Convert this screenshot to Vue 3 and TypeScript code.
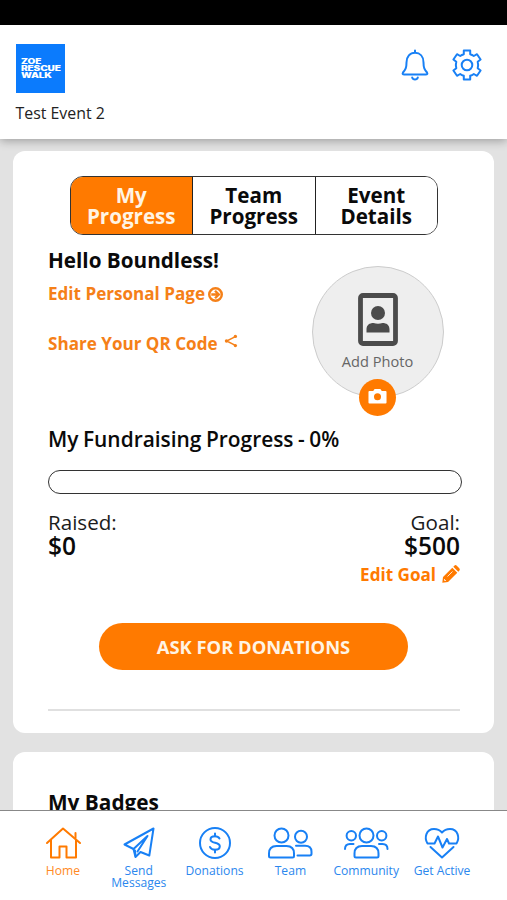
<script setup lang="ts">
import { ref } from 'vue'

interface NavItem {
  id: string
  label: string
  paths: string[]
}

const tabs: string[] = ['My Progress', 'Team Progress', 'Event Details']
const activeTab = ref(0)
const activeNav = ref('home')
const progress = ref(0)

const navItems: NavItem[] = [
  {
    id: 'home',
    label: 'Home',
    paths: ['M6 17 22 2.5 39 17', 'M10 14v17.5h8.5V20.5h7v11H35V14', 'M34.500 12V7'],
  },
  {
    id: 'messages',
    label: 'Send Messages',
    paths: ['M7.500 18.500 36.500 2.500 32.300 29.500 23.500 26 18.500 31 16.500 23Z', 'M16.500 23 30.500 10 20.500 25.500', 'M18 24.500 18.500 30'],
  },
  {
    id: 'donations',
    label: 'Donations',
    paths: [
      'M37 17a15 15 0 1 1-30 0a15 15 0 1 1 30 0Z',
      'M26.500 12.500c-1-1.800-2.500-2.300-4.500-2.300c-3 0-4.500 1.300-4.500 3.200c0 4.500 9.300 2.200 9.300 6.900c0 2.200-2 3.500-4.800 3.500c-2.500 0-4.300-.9-5-2.800',
      'M22 7.500v2.700M22 23.800v2.700',
    ],
  },
  {
    id: 'team',
    label: 'Team',
    paths: [
      'M20.500 9.500a7 7 0 1 1-14 0a7 7 0 1 1 14 0Z',
      'M2.500 31.500h22q1.500 0 1.500-1.500v-2.500q0-7.500-7.500-7.500h-10q-7.500 0-7.500 7.500V30q0 1.500 1.500 1.500Z',
      'M39 10.800a6 6 0 1 1-12 0a6 6 0 1 1 12 0Z',
      'M28 19.800h9q6.500 0 6.500 6v2q0 1.700-1.700 1.700H29.500',
    ],
  },
  {
    id: 'community',
    label: 'Community',
    paths: [
      'M29.500 9.500a7 7 0 1 1-14 0a7 7 0 1 1 14 0Z',
      'M12 31.500h21q1.500 0 1.500-1.500v-2.500q0-7.500-7.500-7.500h-9q-7.500 0-7.500 7.500V30q0 1.500 1.500 1.500Z',
      'M12 9.700a4.700 4.700 0 1 1-9.400 0a4.700 4.700 0 1 1 9.400 0Z',
      'M42.400 9.700a4.700 4.700 0 1 1-9.400 0a4.700 4.700 0 1 1 9.400 0Z',
      'M1 23c0-3.700 2-5 5-5h3.500',
      'M43.500 23c0-3.700-2-5-5-5H35',
    ],
  },
  {
    id: 'active',
    label: 'Get Active',
    paths: [
      'M11 17.500H7.500C4 12 6 3 14 3q5 0 8 3.500Q25 3 30 3c8 0 10 9 6.500 14.500h-7.500L27 13 22.500 21.500 18 10.500 14.500 17.500H11',
      'M10.500 21 22 31.500 33.500 21',
    ],
  },
]
</script>

<template>
  <div class="screen">
    <div class="status-bar"></div>
    <header class="header">
      <div class="brand">
        <div class="logo">
          <span>ZOE</span>
          <span>RESCUE</span>
          <span>WALK</span>
        </div>
        <div class="event-name">Test Event 2</div>
      </div>
      <div class="header-actions">
        <svg class="bell" viewBox="0 0 28 32">
          <path d="M14 1.500v2M5.500 13.500C5.500 7.500 9 3.800 14 3.800S22.500 7.500 22.500 13.500c0 5.500 1 7 3.500 10q1.200 2-1.300 2H3.300q-2.500 0-1.300-2C4.500 20.500 5.500 19 5.500 13.500ZM11.200 28.500q.6 2 2.800 2t2.800-2" />
        </svg>
        <svg class="gear" viewBox="0 0 32 32">
          <path d="M12.800 1.500h6.400v3.700q2 .6 3.600 1.800L26 5.200l3.600 5.300-2.900 2.200q.9 3.200 0 6.600l2.900 2.200L26 26.800 22.800 25q-1.600 1.200-3.600 1.800v3.700h-6.400v-3.700q-2-.6-3.600-1.800L6 26.800 2.400 21.500l2.900-2.200q-.9-3.400 0-6.600L2.400 10.500 6 5.200 9.200 7q1.600-1.200 3.600-1.800Z" />
          <circle cx="16" cy="16" r="5.300" />
        </svg>
      </div>
    </header>

    <main class="content">
      <section class="card progress-card">
        <div class="tabs">
          <button
            v-for="(tab, i) in tabs"
            :key="tab"
            class="tab"
            :class="{ active: activeTab === i }"
            @click="activeTab = i"
          >
            {{ tab }}
          </button>
        </div>

        <div class="profile">
          <div class="profile-links">
            <h1 class="hello">Hello Boundless!</h1>
            <a class="link edit-page">
              <span>Edit Personal Page</span>
              <svg viewBox="0 0 16 16" class="arrow-icon">
                <circle cx="8" cy="8" r="6.700" />
                <path d="M3.500 8h8M7.500 4 11.500 8 7.500 12" />
              </svg>
            </a>
            <a class="link share">
              <span>Share Your QR Code</span>
              <svg viewBox="0 0 16 16" class="share-icon">
                <path d="M13 3 3 8l10 5" />
                <circle cx="13" cy="2.800" r="1.900" />
                <circle cx="2.800" cy="8" r="1.900" />
                <circle cx="13" cy="13.200" r="1.900" />
              </svg>
            </a>
          </div>
          <div class="photo">
            <svg viewBox="0 0 40 53" class="portrait">
              <rect x="2.500" y="2.500" width="35" height="48" rx="2.500" />
              <circle cx="20" cy="20" r="7" />
              <path d="M8.500 39.500v-3c0-4.500 3-6.500 7-6.500q4.500 1.500 9 0c4 0 7 2 7 6.500v3Z" />
            </svg>
            <span class="photo-label">Add Photo</span>
            <span class="camera">
              <svg viewBox="0 0 20 16">
                <path fill-rule="evenodd" d="M1.500 2.800H5.500L7 .5h6l1.500 2.300h4q1 0 1 1v11q0 1-1 1h-17q-1 0-1-1v-11q0-1 1-1ZM10 5.200a3.700 3.700 0 1 0 0 7.400a3.700 3.700 0 1 0 0-7.400Z" />
              </svg>
            </span>
          </div>
        </div>

        <h2 class="progress-title">My Fundraising Progress - {{ progress }}%</h2>
        <div class="bar"><div class="bar-fill" :style="{ width: progress + '%' }"></div></div>

        <div class="amounts">
          <div class="amount">
            <span class="amount-label">Raised:</span>
            <span class="amount-value">$0</span>
          </div>
          <div class="amount right">
            <span class="amount-label">Goal:</span>
            <span class="amount-value">$500</span>
            <a class="link edit-goal">
              <span>Edit Goal</span>
              <svg viewBox="0 0 18 18">
                <path d="M1 12 10.300 2.700l5 5L6 17 .3 17.700ZM11.300 1.700l1-1q1.200-1.200 2.500 0l2.500 2.500q1.200 1.300 0 2.500l-1 1Z" />
                <path class="notch" d="M5.500 11.500 10.500 6.500M2.500 14v1.500h1.500" />
              </svg>
            </a>
          </div>
        </div>

        <button class="ask">ASK FOR DONATIONS</button>
        <div class="divider"></div>
      </section>

      <section class="card badges-card">
        <h2 class="badges-title">My Badges</h2>
      </section>
    </main>

    <nav class="nav">
      <a
        v-for="item in navItems"
        :key="item.id"
        class="nav-item"
        :class="{ active: activeNav === item.id }"
        @click="activeNav = item.id"
      >
        <svg viewBox="0 0 44 34"><path v-for="p in item.paths" :key="p" :d="p" /></svg>
        <span>{{ item.label }}</span>
      </a>
    </nav>
  </div>
</template>

<style>
body {
  margin: 0;
  overflow: hidden;
}
</style>

<style scoped>
.screen {
  box-sizing: border-box;
  display: flex;
  flex-direction: column;
  width: 507px;
  height: 900px;
  overflow: hidden;
  background: #e2e2e2;
  color: #0a0a0a;
  font-family: 'Open Sans', 'Noto Sans', sans-serif;
}
.screen * {
  box-sizing: border-box;
}
h1,
h2 {
  margin: 0;
}
button {
  border: 0;
  margin: 0;
  padding: 0;
  font-family: inherit;
}
svg {
  display: block;
  overflow: visible;
  flex: none;
}
.status-bar {
  flex: none;
  height: 25px;
  background: #000;
}
.header {
  display: flex;
  flex: none;
  justify-content: space-between;
  height: 114px;
  padding: 18.500px 24px 0 15.500px;
  background: #fff;
  box-shadow: 0 2px 9px rgba(0, 0, 0, 0.3);
  z-index: 1;
}
.logo {
  display: flex;
  flex-direction: column;
  justify-content: center;
  width: 49px;
  height: 49px;
  padding-left: 5px;
  background: #0b7bfd;
  color: #fff;
}
.logo span {
  align-self: flex-start;
  font: 900 7px/7px Inter, sans-serif;
  letter-spacing: -0.1px;
  transform: scaleX(1.44);
  transform-origin: left;
}
.event-name {
  margin-top: 9px;
  font-size: 15.900px;
  line-height: 22px;
  color: #222;
}
.header-actions {
  display: flex;
  gap: 22px;
  padding-top: 5px;
}
.header-actions svg {
  fill: none;
  stroke: #1880f5;
  stroke-width: 2;
  stroke-linejoin: round;
  stroke-linecap: round;
}
.bell {
  width: 28px;
  height: 32px;
}
.gear {
  width: 32px;
  height: 32px;
}
.content {
  display: flex;
  flex: 1;
  flex-direction: column;
  gap: 19px;
  min-height: 0;
  padding: 12px 13px 0;
  overflow: hidden;
}
.card {
  flex: none;
  border-radius: 12px;
  background: #fff;
}
.progress-card {
  height: 582px;
  padding: 25px 34px 0 35px;
}
.tabs {
  display: flex;
  width: 368.500px;
  height: 59px;
  margin-left: 21.500px;
  border: 1.500px solid #333;
  border-radius: 13px;
  overflow: hidden;
}
.tab {
  flex: 1;
  padding: 0 14px;
  background: #fff;
  color: #0a0a0a;
  font-size: 20.600px;
  font-weight: 700;
  line-height: 21px;
}
.tab + .tab {
  border-left: 1px solid #222;
}
.tab.active {
  background: #ff7a00;
  color: #fff4e4;
}
.profile {
  display: flex;
  justify-content: space-between;
  height: 181px;
  padding-right: 16.500px;
}
.hello {
  margin-top: 11px;
  font-size: 20.700px;
  line-height: 28px;
}
.link {
  display: flex;
  align-items: center;
  color: #f58018;
  font-size: 17.080px;
  font-weight: 700;
  line-height: 24px;
  white-space: nowrap;
}
.edit-page {
  gap: 3px;
  margin-top: 8px;
}
.share {
  gap: 6px;
  margin-top: 26px;
}
.arrow-icon {
  width: 15px;
  height: 15px;
  fill: none;
  stroke: currentColor;
  stroke-width: 2.600;
}
.share-icon {
  width: 14px;
  height: 14px;
  margin-bottom: 6px;
  fill: currentColor;
}
.share-icon path {
  fill: none;
  stroke: currentColor;
  stroke-width: 1.700;
}
.photo {
  position: relative;
  display: flex;
  flex-direction: column;
  align-items: center;
  width: 132px;
  height: 132px;
  margin-top: 31px;
  padding-top: 26px;
  border: 1px solid #ccc;
  border-radius: 50%;
  background: #eee;
}
.portrait {
  width: 40px;
  height: 53px;
  fill: #4b4b4b;
}
.portrait rect {
  fill: none;
  stroke: #4b4b4b;
  stroke-width: 4.800;
}
.photo-label {
  margin-top: 4px;
  font-size: 14.600px;
  line-height: 22px;
  color: #666;
}
.camera {
  position: absolute;
  bottom: -19px;
  left: 46px;
  display: flex;
  align-items: center;
  justify-content: center;
  width: 37px;
  height: 37px;
  border-radius: 50%;
  background: #ff7a00;
}
.camera svg {
  width: 19px;
  height: 16px;
  margin-bottom: 3px;
  fill: #fff;
}
.progress-title {
  margin-top: 9px;
  font-size: 20.900px;
  font-weight: 600;
  line-height: 28px;
  word-spacing: -0.900px;
  white-space: nowrap;
}
.bar {
  width: 414px;
  height: 24px;
  margin-top: 17px;
  border: 1.500px solid #333;
  border-radius: 12px;
  overflow: hidden;
}
.bar-fill {
  height: 100%;
  background: #ff7a00;
}
.amounts {
  display: flex;
  justify-content: space-between;
  height: 94px;
  margin-top: 17px;
}
.amount {
  display: flex;
  flex-direction: column;
}
.amount.right {
  align-items: flex-end;
}
.amount-label {
  font-size: 20.600px;
  line-height: 23px;
  color: #1c1c1c;
}
.amount-value {
  font-size: 24.500px;
  font-weight: 600;
  line-height: 24px;
}
.edit-goal {
  gap: 6px;
  margin-top: 5px;
  color: #ff7a00;
}
.edit-goal svg {
  width: 18px;
  height: 18px;
  margin-bottom: 2px;
  fill: currentColor;
}
.edit-goal .notch {
  fill: none;
  stroke: #fff;
  stroke-width: 0.800;
}
.ask {
  display: block;
  width: 309px;
  height: 47px;
  margin: 18px 0 0 51px;
  padding-bottom: 1px;
  border-radius: 24px;
  background: #ff7a00;
  color: #fff4e4;
  font-size: 18.360px;
  font-weight: 700;
}
.divider {
  height: 2px;
  margin-top: 39px;
  background: #e0e0e0;
}
.badges-card {
  height: 120px;
  padding: 35px 35px 0;
}
.badges-title {
  font-size: 20.800px;
  line-height: 30px;
}
.nav {
  display: flex;
  flex: none;
  height: 90px;
  padding: 15px 27px 0 25px;
  border-top: 1px solid #888;
  background: #fff;
}
.nav-item {
  display: flex;
  flex: 1;
  flex-direction: column;
  align-items: center;
  color: #2b87ee;
  font-size: 12.100px;
  line-height: 12px;
  text-align: center;
}
.nav-item svg {
  width: 44px;
  height: 34px;
  margin-bottom: 5px;
  fill: none;
  stroke: #1880f5;
  stroke-width: 2;
  stroke-linecap: round;
  stroke-linejoin: round;
}
.nav-item.active {
  color: #ff8a24;
}
.nav-item.active svg {
  stroke: #ff7a00;
}
</style>
